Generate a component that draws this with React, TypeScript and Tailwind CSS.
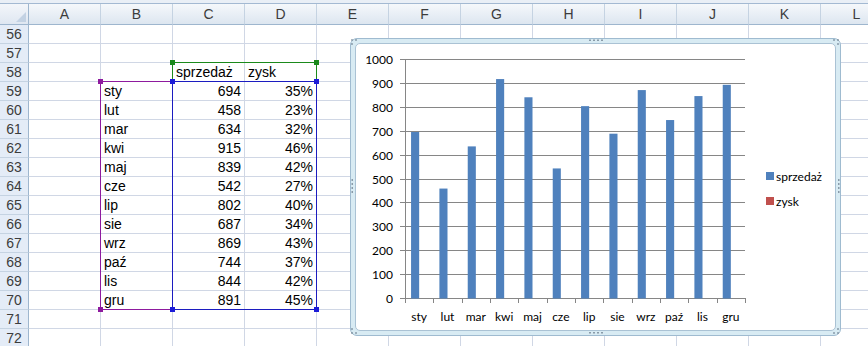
const COLS = ["A", "B", "C", "D", "E", "F", "G", "H", "I", "J", "K", "L"];
const ROWS = Array.from({ length: 17 }, (_, i) => 56 + i);
const months = ["sty", "lut", "mar", "kwi", "maj", "cze", "lip", "sie", "wrz", "paź", "lis", "gru"];
const sales = [694, 458, 634, 915, 839, 542, 802, 687, 869, 744, 844, 891];
const profit = [35, 23, 32, 46, 42, 27, 40, 34, 43, 37, 42, 45];

const cellFont = { fontFamily: "'Liberation Sans', Arial, sans-serif" };

function cellValue(row: number, col: string): { text: string; right?: boolean } | null {
  if (row === 58 && col === "C") return { text: "sprzedaż" };
  if (row === 58 && col === "D") return { text: "zysk" };
  const i = row - 59;
  if (i < 0 || i > 11) return null;
  if (col === "B") return { text: months[i] };
  if (col === "C") return { text: String(sales[i]), right: true };
  if (col === "D") return { text: profit[i] + "%", right: true };
  return null;
}

// chart geometry, page coords
const X0 = 404;
const X1 = 744;
const CAT = (X1 - X0) / 12;
const yOf = (v: number) => 297.3 - v * 0.2396;
const ticks = [0, 100, 200, 300, 400, 500, 600, 700, 800, 900, 1000];

function Chart() {
  return (
    <div className="absolute left-[350px] top-[38px] w-[491px] h-[298px] rounded-[7px] border border-[#9fbbd0] bg-[#d8ebf3] p-[4px]">
      <div className="relative w-full h-full rounded-[5px] border border-[#aac2d4] bg-white overflow-hidden">
        <svg width="480" height="287" className="absolute left-0 top-0">
          <g transform="translate(-355,-43)" style={{ fontFamily: "Lato, 'Liberation Sans', sans-serif" }}>
            {ticks.map((v) => {
              const y = Math.round(yOf(v)) + 0.5;
              return (
                <g key={v}>
                  <line x1={399} x2={X1} y1={y} y2={y} stroke="#868686" strokeWidth={1} />
                  <text x={392} y={y} textAnchor="end" dominantBaseline="central" fontSize={12} fill="#000">
                    {v}
                  </text>
                </g>
              );
            })}
            <line x1={X0 + 0.5} x2={X0 + 0.5} y1={Math.round(yOf(1000))} y2={302} stroke="#868686" />
            {Array.from({ length: 13 }, (_, i) => {
              const x = Math.round(X0 + i * CAT) + 0.5;
              return <line key={i} x1={x} x2={x} y1={297} y2={302} stroke="#868686" />;
            })}
            {sales.map((v, i) => {
              const x = X0 + i * CAT + CAT * 0.214;
              const top = yOf(v);
              return <rect key={i} x={x} y={top} width={CAT * 0.286} height={297.5 - top} fill="#4f81bd" />;
            })}
            {months.map((m, i) => (
              <text key={m} x={X0 + (i + 0.5) * CAT} y={315} textAnchor="middle" dominantBaseline="central" fontSize={12} fill="#000">
                {m}
              </text>
            ))}
            <rect x={765} y={171} width={8} height={8} fill="#4f81bd" />
            <text x={775} y={175} dominantBaseline="central" fontSize={12} fill="#000">
              sprzedaż
            </text>
            <rect x={765} y={196} width={8} height={8} fill="#c0504d" />
            <text x={775} y={200} dominantBaseline="central" fontSize={12} fill="#000">
              zysk
            </text>
          </g>
        </svg>
      </div>
      {/* sizing handles */}
      <svg width="491" height="298" className="absolute -left-px -top-px pointer-events-none">
        <g transform="translate(-350,-38)" fill="#6f8191">
          {[
            [352, 40], [356, 40], [352, 44],
            [834, 40], [838, 40], [838, 44],
            [352, 329], [352, 333], [356, 333],
            [838, 329], [838, 333], [834, 333],
          ].map(([x, y], i) => (
            <rect key={"c" + i} x={x - 0.75} y={y - 0.75} width={1.5} height={1.5} />
          ))}
          {[590, 594, 598, 602].map((x) => (
            <g key={x}>
              <rect x={x - 0.75} y={39.5} width={1.5} height={1.5} />
              <rect x={x - 0.75} y={332} width={1.5} height={1.5} />
            </g>
          ))}
          {[180, 184, 188, 192].map((y) => (
            <g key={y}>
              <rect x={351.5} y={y - 0.75} width={1.5} height={1.5} />
              <rect x={838} y={y - 0.75} width={1.5} height={1.5} />
            </g>
          ))}
        </g>
      </svg>
    </div>
  );
}

export default function App() {
  return (
    <div className="relative w-[868px] h-[346px] overflow-hidden bg-white" style={cellFont}>
      <div className="h-[4px] bg-[#e9eff6] border-b border-[#a3b9d2]" />
      {/* column headers */}
      <div className="flex h-[21px]">
        <div className="relative w-[29px] shrink-0 border-r border-b border-[#9eb6ce] bg-gradient-to-b from-[#f3f6fa] to-[#dfe7f1]">
          <svg width="10" height="10" className="absolute right-[2px] bottom-[2px]">
            <polygon points="10,0 10,10 0,10" fill="#c3d2e3" />
          </svg>
        </div>
        {COLS.map((c) => (
          <div
            key={c}
            className="w-[72px] shrink-0 flex items-center justify-center border-r border-b border-r-[#c5d3e2] border-b-[#9eb6ce] bg-gradient-to-b from-[#f5f8fb] to-[#dde6f0] text-[14px] text-[#3c3c3c]"
          >
            {c}
          </div>
        ))}
      </div>
      {/* rows */}
      {ROWS.map((r) => (
        <div key={r} className="flex h-[19px]">
          <div className="w-[29px] shrink-0 flex items-center justify-center border-r border-b border-r-[#9eb6ce] border-b-[#c5d3e2] bg-[#e4ecf7] text-[14px] text-[#3c3c3c]">
            {r}
          </div>
          {COLS.map((c) => {
            const v = cellValue(r, c);
            return (
              <div
                key={c}
                className={`w-[72px] shrink-0 flex items-center border-r border-b border-[#d0d7e5] px-[3px] text-[14px] text-black whitespace-nowrap ${
                  v?.right ? "justify-end" : "justify-start"
                }`}
              >
                {v?.text}
              </div>
            );
          })}
        </div>
      ))}

      {/* range highlights with corner handles */}
      <div className="absolute left-[100px] top-[81px] w-[73px] h-[229px] border border-[#8e1a9e]">
        <span className="absolute -left-[3px] -top-[3px] w-[5px] h-[5px] bg-[#8e1a9e]" />
        <span className="absolute -left-[3px] -bottom-[3px] w-[5px] h-[5px] bg-[#8e1a9e]" />
      </div>
      <div className="absolute left-[172px] top-[62px] w-[145px] h-[20px] border border-[#1b8a1b]">
        <span className="absolute -left-[3px] -top-[3px] w-[5px] h-[5px] bg-[#1b8a1b]" />
        <span className="absolute -right-[3px] -top-[3px] w-[5px] h-[5px] bg-[#1b8a1b]" />
      </div>
      <div className="absolute left-[172px] top-[81px] w-[145px] h-[229px] border border-[#1c1cc0]">
        <span className="absolute -left-[3px] -top-[3px] w-[5px] h-[5px] bg-[#1c1cd8]" />
        <span className="absolute -right-[3px] -top-[3px] w-[5px] h-[5px] bg-[#1c1cd8]" />
        <span className="absolute -left-[3px] -bottom-[3px] w-[5px] h-[5px] bg-[#1c1cd8]" />
        <span className="absolute -right-[3px] -bottom-[3px] w-[5px] h-[5px] bg-[#1c1cd8]" />
      </div>

      <Chart />
    </div>
  );
}
